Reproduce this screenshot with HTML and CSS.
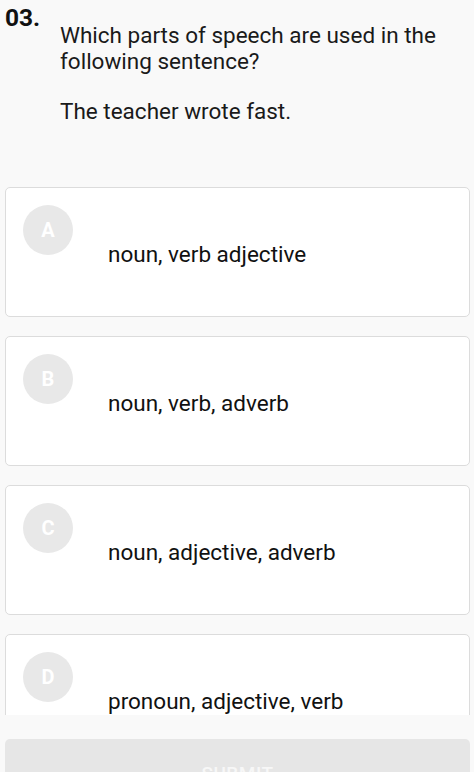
FILE: index.html
```html
<!DOCTYPE html>
<html>
<head>
<meta charset="utf-8">
<link rel="stylesheet" href="styles.css">
</head>
<body>
<div class="page">
  <main class="content">
    <section class="question">
      <div class="qnum">03.</div>
      <div class="qbody">
        <p class="qtext">Which parts of speech are used in the following sentence?</p>
        <p class="qsentence">The teacher wrote fast.</p>
      </div>
    </section>
    <section class="options">
      <div class="option"><span class="badge">A</span><span class="label">noun, verb adjective</span></div>
      <div class="option"><span class="badge">B</span><span class="label">noun, verb, adverb</span></div>
      <div class="option"><span class="badge">C</span><span class="label">noun, adjective, adverb</span></div>
      <div class="option"><span class="badge">D</span><span class="label">pronoun, adjective, verb</span></div>
    </section>
  </main>
  <footer class="footer">
    <button class="submit">SUBMIT</button>
  </footer>
</div>
</body>
</html>
```

FILE: styles.css
```css
* { box-sizing: border-box; }
html, body { margin: 0; padding: 0; }
body {
  background: #f9f9f9;
  font-family: Roboto, "Noto Sans", "Liberation Sans", sans-serif;
  color: #1a1a1a;
}
.page {
  height: 772px;
  display: flex;
  flex-direction: column;
}
.content {
  flex: 1;
  overflow: hidden;
  min-height: 0;
}
.question {
  display: flex;
  padding: 4px 0 0 5px;
  height: 187px;
}
.qnum {
  width: 55px;
  font-size: 24.5px;
  font-weight: 700;
  line-height: 28px;
  color: #111;
}
.qbody { padding-top: 18px; }
.qtext {
  margin: 0;
  font-size: 22.5px;
  line-height: 26px;
  width: 400px;
}
.qsentence {
  margin: 24px 0 0;
  font-size: 22.5px;
  line-height: 26px;
}
.options {
  display: flex;
  flex-direction: column;
  gap: 19px;
  padding: 0 4px 0 5px;
}
.option {
  height: 130px;
  flex-shrink: 0;
  background: #fff;
  border: 1px solid #dcdcdc;
  border-radius: 5px;
  display: flex;
  padding: 17px 0 0 17px;
}
.badge {
  width: 50px;
  height: 50px;
  border-radius: 50%;
  background: #e8e8e8;
  color: #fff;
  font-size: 20px;
  font-weight: 700;
  display: flex;
  align-items: center;
  justify-content: center;
  flex-shrink: 0;
}
.label {
  margin-left: 35px;
  align-self: center;
  margin-top: -14px;
  font-size: 22.5px;
  color: #111;
}
.footer {
  height: 57px;
  flex-shrink: 0;
  overflow: hidden;
  padding: 24px 4px 0 5px;
  background: #f9f9f9;
}
.submit {
  display: block;
  width: 100%;
  height: 68px;
  border: none;
  border-radius: 5px;
  background: #e6e6e6;
  color: #f7f7f7;
  font-family: Roboto, "Noto Sans", sans-serif;
  font-size: 19px;
  font-weight: 500;
  letter-spacing: 0.5px;
  padding: 0;
}
```
